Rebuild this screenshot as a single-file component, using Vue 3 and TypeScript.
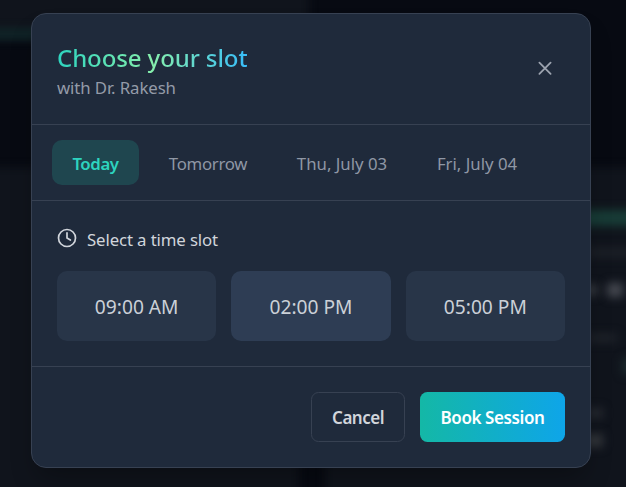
<script setup lang="ts">
import { ref } from 'vue'

interface Choice {
  label: string
  key: string
}

const days: Choice[] = [
  { label: 'Today', key: 'today' },
  { label: 'Tomorrow', key: 'tomorrow' },
  { label: 'Thu, July 03', key: 'thu' },
  { label: 'Fri, July 04', key: 'fri' },
]
const times: Choice[] = [
  { label: '09:00 AM', key: 'morning' },
  { label: '02:00 PM', key: 'afternoon' },
  { label: '05:00 PM', key: 'evening' },
]
const activeDay = ref('today')
const activeTime = ref('afternoon')
</script>

<template>
  <div class="page">
    <div class="backdrop" aria-hidden="true">
      <i class="card card-top"></i>
      <i class="card card-left"></i>
      <i class="card card-right"></i>
      <i class="glow glow-line"></i>
      <i class="glow glow-name"></i>
      <i class="glow smudge-a"></i>
      <i class="glow smudge-b"></i>
      <i class="glow smudge-c"></i>
      <i class="glow smudge-d"></i>
      <i class="glow smudge-e"></i>
      <i class="glow smudge-f"></i>
      <i class="glow smudge-g"></i>
    </div>
    <section class="modal" role="dialog">
      <header class="head">
        <div>
          <h2 class="title"><span>Choose your slot</span></h2>
          <p class="subtitle">with Dr. Rakesh</p>
        </div>
        <button class="close" aria-label="Close">
          <svg width="20" height="20" viewBox="0 0 20 20" fill="none" stroke="currentColor" stroke-width="1.8" stroke-linecap="round">
            <path d="M4.4 4.6l11.2 11.2M15.6 4.6L4.4 15.8" />
          </svg>
        </button>
      </header>
      <nav class="tabs">
        <button
          v-for="d in days"
          :key="d.key"
          :class="['tab', d.key, { active: d.key === activeDay }]"
          @click="activeDay = d.key"
        >{{ d.label }}</button>
      </nav>
      <div class="body">
        <div class="prompt">
          <svg width="20" height="20" viewBox="0 0 20 20" fill="none" stroke="currentColor" stroke-width="1.7" stroke-linecap="round" stroke-linejoin="round">
            <circle cx="10" cy="10" r="8.5" />
            <path d="M10 4.8V10l3.4 2" />
          </svg>
          <span>Select a time slot</span>
        </div>
        <div class="slots">
          <button
            v-for="t in times"
            :key="t.key"
            :class="['slot', { active: t.key === activeTime }]"
            @click="activeTime = t.key"
          >{{ t.label }}</button>
        </div>
      </div>
      <footer class="foot">
        <button class="cancel">Cancel</button>
        <button class="book">Book Session</button>
      </footer>
    </section>
  </div>
</template>

<style>
body {
  margin: 0;
  background: #070a12;
}
</style>

<style scoped>
.page {
  position: relative;
  box-sizing: border-box;
  height: 487px;
  padding: 13px 35px 0 31px;
  overflow: hidden;
  background: #070a12;
  font-family: "Noto Sans", "Open Sans", sans-serif;
}
.backdrop {
  position: absolute;
  inset: 0;
}
.backdrop i {
  position: absolute;
}
.card {
  background: #10141c;
  filter: blur(4px);
}
.card-top { left: -20px; top: -20px; width: 329px; height: 58px; }
.card-left { left: -20px; top: 167px; width: 319px; height: 340px; }
.card-right { left: 325px; top: 167px; width: 330px; height: 340px; }
.glow { filter: blur(5px); }
.glow-line { left: -20px; top: 29px; width: 320px; height: 10px; background: #10272a; }
.glow-name { left: 580px; top: 210px; width: 60px; height: 16px; background: #183d37; }
.smudge-a { left: 588px; top: 248px; width: 45px; height: 9px; background: #1d2128; }
.smudge-b { left: 584px; top: 285px; width: 14px; height: 10px; background: #373a41; }
.smudge-c { left: 607px; top: 283px; width: 16px; height: 14px; background: #454850; }
.smudge-d { left: 588px; top: 334px; width: 29px; height: 8px; background: #20242b; }
.smudge-e { left: 622px; top: 358px; width: 20px; height: 16px; background: #1b292d; }
.smudge-f { left: 588px; top: 408px; width: 15px; height: 10px; background: #272a31; }
.smudge-g { left: 586px; top: 434px; width: 17px; height: 13px; background: #33363b; }
.modal {
  position: relative;
  box-sizing: border-box;
  width: 560px;
  height: 455px;
  display: grid;
  grid-template-rows: 111px 76px 166px 1fr;
  border: 1px solid #374152;
  border-radius: 15px;
  background: #1f2a3b;
  box-shadow: 0 16px 26px -6px rgba(0, 0, 0, 0.3);
}
button {
  margin: 0;
  padding: 0;
  border: 0;
  background: none;
  color: inherit;
  font: inherit;
  white-space: nowrap;
  cursor: pointer;
}
.head {
  box-sizing: border-box;
  display: flex;
  justify-content: space-between;
  align-items: flex-start;
  padding: 28px 35px 0 25px;
  border-bottom: 1px solid #374152;
}
.title {
  margin: 0;
  height: 34px;
  font-size: 24px;
  line-height: 31px;
  font-weight: 500;
  letter-spacing: -0.1px;
}
.title span {
  display: inline-block;
  background: linear-gradient(90deg, #2dd4bf, #86efac 50%, #38bdf8);
  -webkit-background-clip: text;
  background-clip: text;
  color: transparent;
}
.subtitle {
  margin: 0;
  font-size: 16.8px;
  line-height: 24px;
  letter-spacing: -0.1px;
  color: #949ba8;
}
.close {
  display: flex;
  margin-top: 16px;
  color: #9ca3af;
}
.tabs {
  box-sizing: border-box;
  display: flex;
  gap: 10px;
  padding: 15px 20px;
  border-bottom: 1px solid #374152;
}
.tab {
  box-sizing: border-box;
  width: 118px;
  height: 45px;
  padding-top: 2px;
  border-radius: 10px;
  font-size: 16.8px;
  line-height: 43px;
  letter-spacing: -0.3px;
  color: #8f97a5;
}
.today { width: 87px; }
.thu,
.fri {
  width: 130px;
  letter-spacing: 0;
}
.fri { width: 120px; }
.tab.active {
  background: #1f464f;
  color: #2dd4bf;
  font-weight: 600;
  letter-spacing: -0.4px;
}
.body {
  box-sizing: border-box;
  padding: 27px 25px 0;
  border-bottom: 1px solid #374152;
}
.prompt {
  display: flex;
  gap: 10px;
  height: 43px;
  font-size: 16.8px;
  line-height: 24px;
  letter-spacing: -0.12px;
  color: #d1d5db;
}
.slots {
  display: grid;
  grid-template-columns: repeat(3, 1fr);
  gap: 15px;
}
.slot {
  box-sizing: border-box;
  height: 70px;
  border-radius: 10px;
  background: #283548;
  font-size: 19.2px;
  letter-spacing: 0;
  color: #cbd0d7;
}
.slot.active {
  background: #2e3d54;
}
.foot {
  display: flex;
  justify-content: flex-end;
  align-items: flex-start;
  gap: 15px;
  padding: 25px 25px 0;
}
.cancel,
.book {
  box-sizing: border-box;
  height: 50px;
  border-radius: 7.5px;
  font-size: 17px;
  font-weight: 600;
  letter-spacing: -0.4px;
}
.cancel {
  width: 94px;
  border: 1px solid #374152;
  color: #d1d5db;
  letter-spacing: -0.5px;
}
.book {
  width: 145px;
  background: linear-gradient(90deg, #14b8a6, #0ea5e9);
  color: #fff;
}
</style>
